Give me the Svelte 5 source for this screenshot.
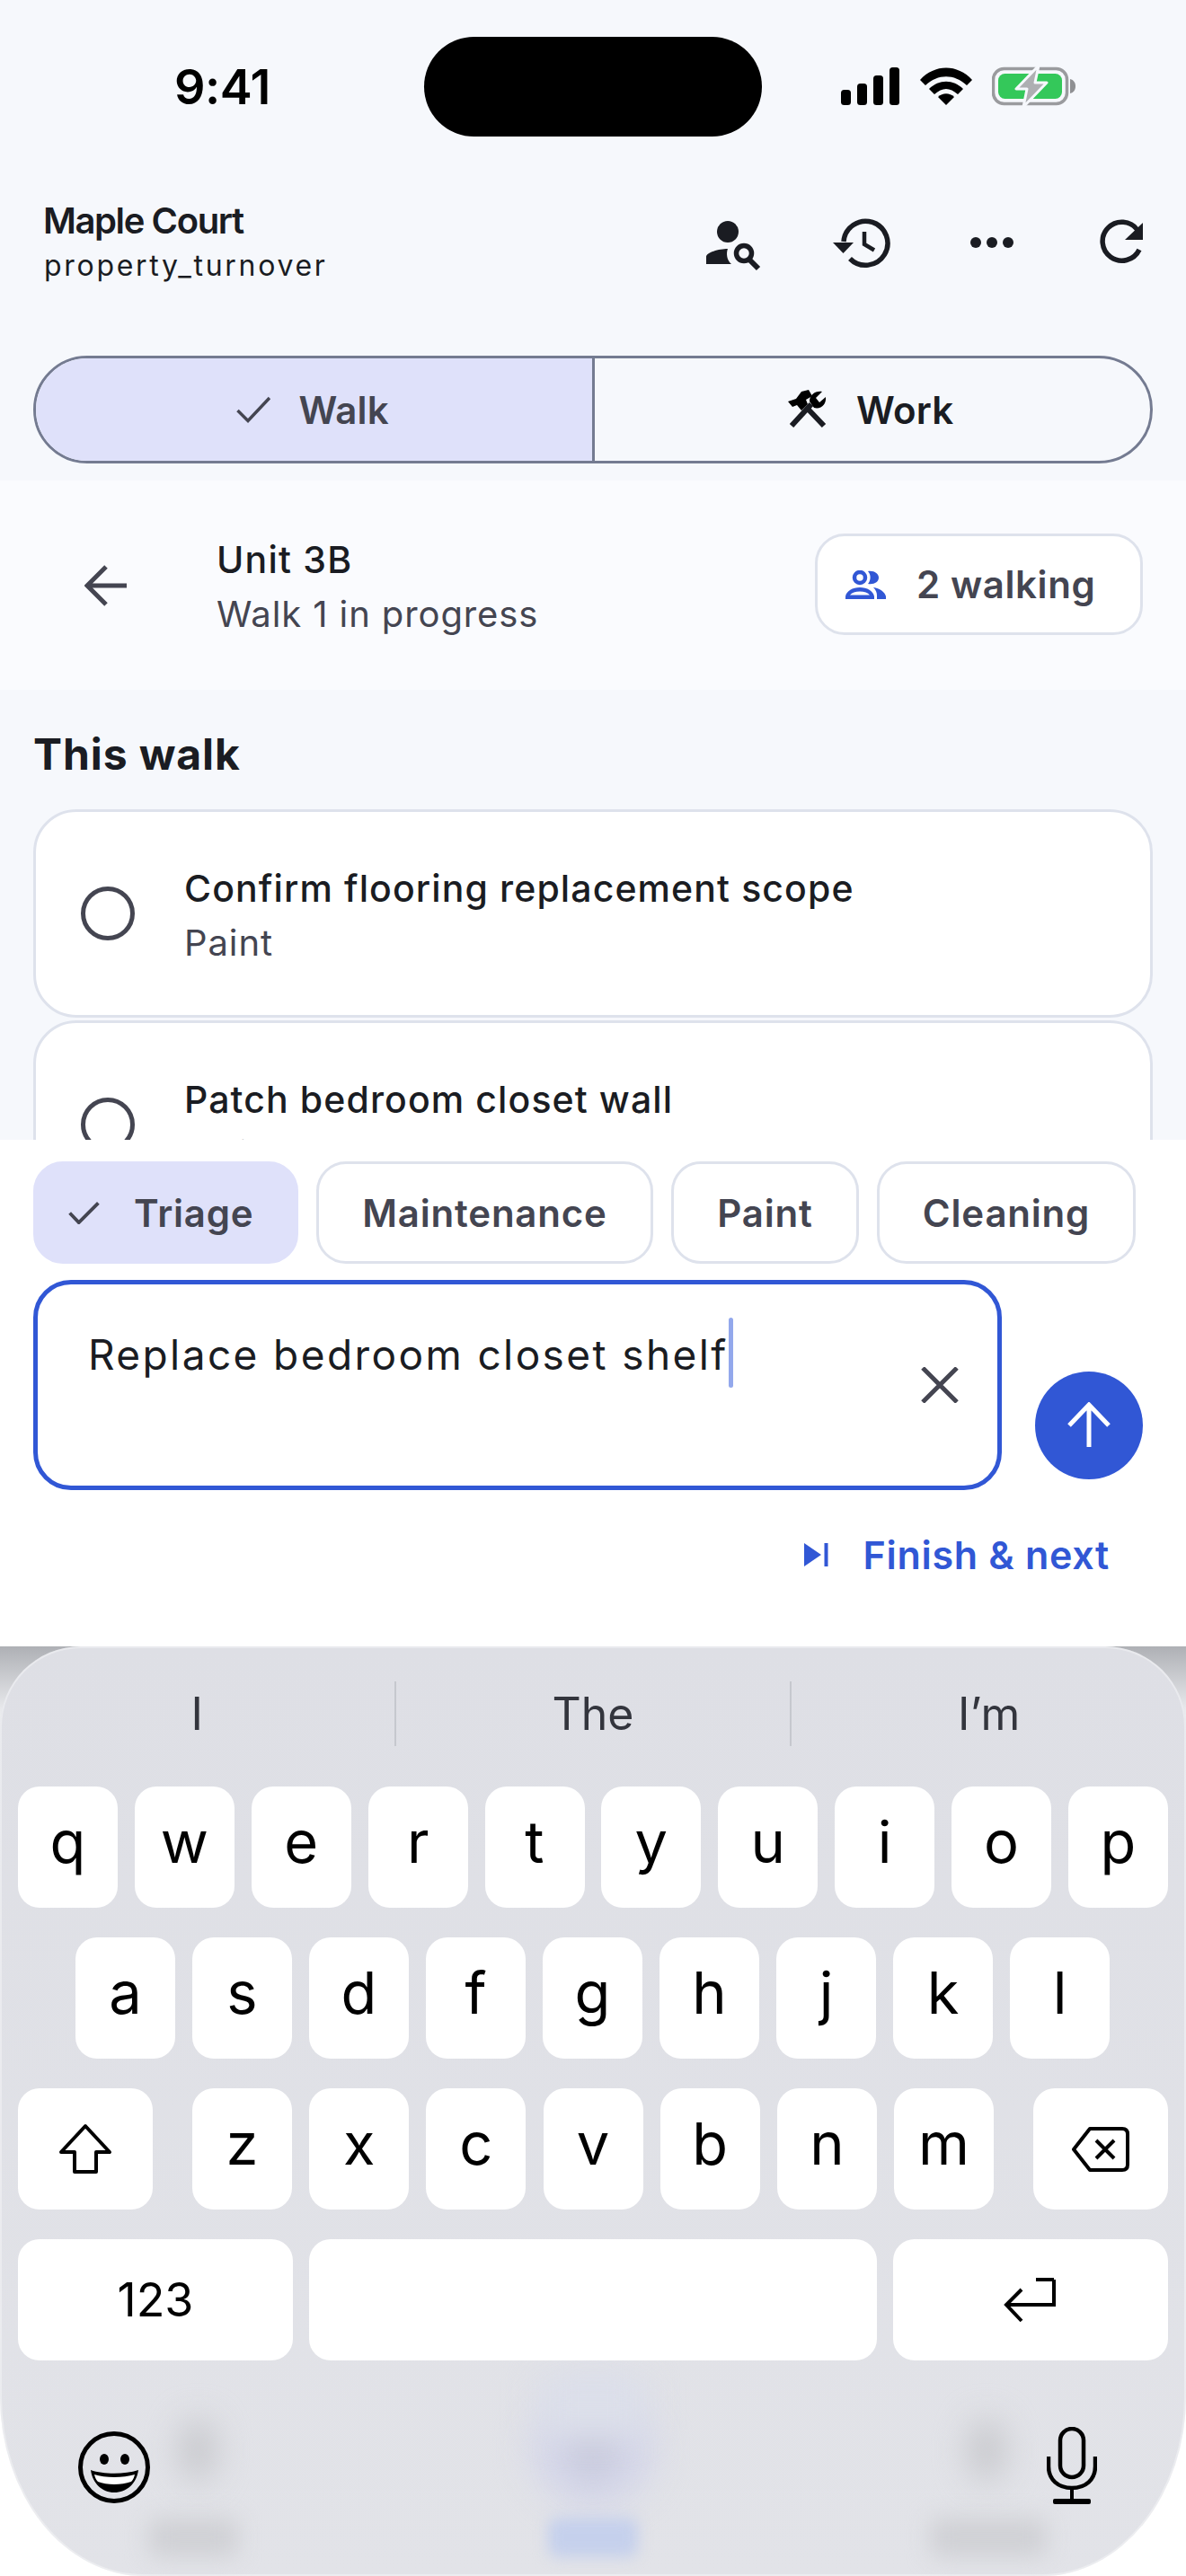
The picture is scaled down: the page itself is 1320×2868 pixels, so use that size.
<script>
  const chips = [
    { label: 'Maintenance', w: 375 },
    { label: 'Paint', w: 209 },
    { label: 'Cleaning', w: 288 }
  ];
  const row1 = ['q','w','e','r','t','y','u','i','o','p'];
  const row2 = ['a','s','d','f','g','h','j','k','l'];
  const row3 = ['z','x','c','v','b','n','m'];
</script>

<div class="phone">
  <header class="status">
    <span class="time">9:41</span>
    <div class="island"></div>
    <div class="sys">
      <svg class="signal" viewBox="0 0 66 42" width="66" height="42"><rect x="0" y="25" width="11" height="17" rx="3.5"/><rect x="18" y="18" width="11" height="24" rx="3.5"/><rect x="36" y="9" width="11" height="33" rx="3.5"/><rect x="54" y="0" width="11" height="42" rx="3.5"/></svg>
      <svg class="wifi" viewBox="0 0 58 42" width="58" height="42"><path d="M0 14 C16 -4 42 -4 58 14 L52 20 C38 7 20 7 6 20Z"/><path d="M10 24 C21 13 37 13 48 24 L42 30 C33 22 25 22 16 30Z"/><path d="M20 33 C25 28 33 28 38 33 L29 42Z"/></svg>
      <svg class="batt" viewBox="0 0 94 46" width="94" height="46"><rect x="1.5" y="3.5" width="82" height="39" rx="12" fill="none" stroke="#9a9b9e" stroke-width="3.5"/><rect x="7" y="9" width="71" height="28" rx="7.5" fill="#34c85a"/><path d="M87 15 C91 16 93 19 93 23 C93 27 91 30 87 31Z" fill="#8f9093"/><path d="M52 0 L27 26 L39 26 L35 46 L61 19 L48 19Z" fill="#aeafb2" stroke="#f6f8fc" stroke-width="3" stroke-linejoin="round"/></svg>
    </div>
  </header>

  <section class="topbar">
    <div class="brand">
      <div class="b1">Maple Court</div>
      <div class="b2">property_turnover</div>
    </div>
    <div class="tools">
      <svg class="tool" viewBox="0 0 60 60" width="60" height="60"><circle cx="24" cy="18" r="12"/><path d="M0 54 V46 C0 41 14 37 24 37 C22 42 23 50 28 54Z"/><circle cx="42" cy="42" r="8.5" fill="none" stroke="#1a1c22" stroke-width="5.5"/><path d="M48 49 L58 59" stroke="#1a1c22" stroke-width="6" fill="none"/></svg>
      <svg class="tool" viewBox="0 0 60 60" width="60" height="60"><path d="M9 29 A24.500 24.500 0 1 1 16 48" fill="none" stroke="#1a1c22" stroke-width="5.5"/><path d="M-3 30 L20 30 L8.500 42Z"/><path d="M32 18 V32 L43 38.500" fill="none" stroke="#1a1c22" stroke-width="4.5"/></svg>
      <svg class="tool" viewBox="0 0 60 60" width="60" height="60"><circle cx="12" cy="30" r="6"/><circle cx="30" cy="30" r="6"/><circle cx="48" cy="30" r="6"/></svg>
      <svg class="tool clip" viewBox="0 0 54 60" width="54" height="60"><path d="M48 16 A21.500 21.500 0 1 0 50 38" fill="none" stroke="#1a1c22" stroke-width="5.5"/><path d="M34 27 L54 8 L54 27Z"/></svg>
    </div>
  </section>

  <div class="seg">
    <div class="seg-btn on">
      <svg viewBox="0 0 38 30" width="38" height="30"><path d="M1.500 16 L13 27.500 L37 2" fill="none" stroke="#444551" stroke-width="3.5"/></svg>
      <span>Walk</span>
    </div>
    <div class="seg-btn off">
      <svg viewBox="0 0 44 44" width="44" height="44"><path d="M4 40 L26 16 M40 40 L20 19" fill="none" stroke="#1a1c22" stroke-width="6"/><path d="M0 13 L9 10 L15 2 L23 0 L27 7 L20 11 L22 16 L15 23 L10 17 L5 19Z"/><path d="M24 13 C24 6 30 1 38 2 L31 9 L35 14 L42 8 C43 16 37 22 29 20Z"/></svg>
      <span>Work</span>
    </div>
  </div>

  <section class="walkhead">
    <svg class="back" viewBox="0 0 48 48" width="48" height="48"><path d="M47 24 H4 M24 3 L3 24 L24 45" fill="none" stroke="#444551" stroke-width="5"/></svg>
    <div class="wh-text">
      <div class="wh1">Unit 3B</div>
      <div class="wh2">Walk 1 in progress</div>
    </div>
    <div class="walking">
      <svg viewBox="0 0 45 32" width="45" height="32"><circle cx="16" cy="8" r="6" fill="none" stroke="#3157d5" stroke-width="4.5"/><path d="M25 1 C32 0 37 4 37 8 C37 13 32 16 25 15 C28 12 29 5 25 1Z" fill="#3157d5"/><path d="M0 32 V29 C1 23 8 19 16 19 C24 19 31 23 32 29 V32Z M5 27.500 H27 C25 25 21 23.500 16 23.500 C11 23.500 7 25 5 27.500Z" fill="#3157d5" fill-rule="evenodd"/><path d="M31 19 C38 20 44 24 45 29 V32 H35 V28 C35 25 34 22 31 19Z" fill="#3157d5"/></svg>
      <span>2 walking</span>
    </div>
  </section>

  <section class="list">
    <h2>This walk</h2>
    <div class="card">
      <span class="radio"></span>
      <div class="ctext"><div class="c1">Confirm flooring replacement scope</div><div class="c2">Paint</div></div>
    </div>
    <div class="card">
      <span class="radio"></span>
      <div class="ctext"><div class="c1">Patch bedroom closet wall</div><div class="c2">Maintenance</div></div>
    </div>
  </section>

  <section class="composer">
    <div class="chips">
      <div class="chip on">
        <svg viewBox="0 0 36 26" width="35" height="25"><path d="M1.500 13 L12 24 L34.500 1.500" fill="none" stroke="#444551" stroke-width="4"/></svg>
        <span>Triage</span>
      </div>
      {#each chips as c}
        <div class="chip" style="width:{c.w}px">{c.label}</div>
      {/each}
      <div class="chip stub"></div>
    </div>
    <div class="inputrow">
      <div class="input">
        <span class="itext">Replace bedroom closet shelf</span><span class="caret"></span>
        <svg class="clear" viewBox="0 0 42 40" width="42" height="40"><path d="M2 1 L40 39 M40 1 L2 39" stroke="#444551" stroke-width="5" fill="none"/></svg>
      </div>
      <div class="send">
        <svg viewBox="0 0 52 52" width="52" height="52"><path d="M26 50 V4 M4 26 L26 3 L48 26" fill="none" stroke="#fff" stroke-width="5"/></svg>
      </div>
    </div>
    <div class="finish">
      <svg viewBox="0 0 28 28" width="28" height="28"><path d="M1 1 L20 14 L1 27Z" fill="#3157d5"/><rect x="23.500" y="1" width="4" height="26" fill="#3157d5"/></svg>
      <span>Finish &amp; next</span>
    </div>
  </section>

  <section class="kbwrap">
    <div class="kb">
      <i class="blob b-a"></i><i class="blob b-b"></i><i class="blob b-b2"></i><i class="blob b-b3"></i><i class="blob b-c"></i>
      <i class="blob t-a"></i><i class="blob t-b"></i><i class="blob t-c"></i>
      <div class="sugg">
        <span>I</span><span>The</span><span>I’m</span>
      </div>
      <div class="row r1">{#each row1 as k}<div class="key">{k}</div>{/each}</div>
      <div class="row r2">{#each row2 as k}<div class="key">{k}</div>{/each}</div>
      <div class="row r3">
        <div class="key shift">
          <svg viewBox="0 0 62 62" width="62" height="62"><path d="M31 5 L58 34 H43 V56 H19 V34 H4Z" fill="none" stroke="#000" stroke-width="4" stroke-linejoin="round"/></svg>
        </div>
        <div class="mid">{#each row3 as k}<div class="key">{k}</div>{/each}</div>
        <div class="key del">
          <svg viewBox="0 0 64 52" width="64" height="52"><path d="M20 3 H56 C60 3 62 5 62 9 V43 C62 47 60 49 56 49 H20 L2 26Z" fill="none" stroke="#000" stroke-width="4" stroke-linejoin="round"/><path d="M27 16 L47 36 M47 16 L27 36" stroke="#000" stroke-width="4" fill="none"/></svg>
        </div>
      </div>
      <div class="row r4">
        <div class="key k123">123</div>
        <div class="key space"></div>
        <div class="key ret">
          <svg viewBox="0 0 60 52" width="60" height="52"><path d="M56 3 V31 H4 M20 14 L3 31 L20 49 M36 3 H56" fill="none" stroke="#000" stroke-width="4"/></svg>
        </div>
      </div>
      <div class="kbbottom">
        <svg class="emoji" viewBox="0 0 80 80" width="80" height="80"><circle cx="40" cy="40" r="37.500" fill="none" stroke="#000" stroke-width="5"/><ellipse cx="29" cy="31" rx="5" ry="6"/><ellipse cx="52" cy="31" rx="5" ry="6"/><path d="M14 43 C28 48 52 48 67 43 C65 58 54 68 40 68 C27 68 16 58 14 43Z"/><path d="M18 48 C30 52 50 52 63 48 C62 52 61 54 59 56 C48 60 32 60 22 56 C20 54 19 52 18 48Z" fill="#fff"/></svg>
        <svg class="mic" viewBox="0 0 56 86" width="56" height="86"><rect x="15" y="2" width="26" height="54" rx="13" fill="none" stroke="#000" stroke-width="4.5"/><path d="M2 33 V44 C2 59 13 68 28 68 C43 68 54 59 54 44 V33" fill="none" stroke="#000" stroke-width="4.5"/><path d="M28 68 V82" stroke="#000" stroke-width="4"/><rect x="7" y="80" width="42" height="6" rx="2"/></svg>
      </div>
    </div>
  </section>
</div>

<style>
  :global(body) { margin: 0; background: #f6f8fc; }
  .phone { width: 1320px; height: 2868px; overflow: hidden; background: #f6f8fc; font-family: Inter, "Noto Sans", sans-serif; color: #1a1c22; display: flex; flex-direction: column; }
  .status { height: 194px; box-sizing: border-box; padding-top: 41px; display: flex; align-items: flex-start; position: relative; flex: none; }
  .time { position: absolute; left: 194px; top: 69px; font-size: 54px; line-height: 56px; font-weight: 600; letter-spacing: -0.5px; color: #000; }
  .island { width: 376px; height: 111px; border-radius: 56px; background: #000; margin-left: 472px; }
  .sys { position: absolute; left: 936px; top: 73px; display: flex; gap: 24px; align-items: center; }
  .sys svg { display: block; }
  .wifi { margin-left: -2px; }
  .batt { margin-left: -2px; }
  .topbar { height: 116px; box-sizing: border-box; padding: 28px 37px 0 49px; display: flex; justify-content: space-between; flex: none; }
  .b1 { font-size: 40px; line-height: 48px; font-weight: 600; letter-spacing: -1.4px; margin-left: -1px; }
  .b2 { font-size: 32px; line-height: 42px; letter-spacing: 2.7px; margin-top: 5px; }
  .tools { display: flex; gap: 84px; align-items: center; margin-top: 18px; height: 60px; width: 492px; flex: none; margin-right: 5px; }
  .tool { fill: #1a1c22; display: block; overflow: visible; flex: none; }
  .tool.clip { overflow: hidden; }
  .seg { margin: 86px 37px 0; height: 120px; box-sizing: border-box; border: 3px solid #747b91; border-radius: 60px; display: flex; overflow: hidden; flex: none; }
  .seg-btn { flex: 1; display: flex; align-items: center; justify-content: center; gap: 32px; font-size: 42px; font-weight: 600; letter-spacing: 0.2px; }
  .seg-btn.on { background: #dfe1fa; color: #444551; border-right: 3px solid #747b91; padding-right: 3px; }
  .seg-btn.off { color: #1a1c22; padding-right: 3px; }
  .walkhead { margin-top: 19px; height: 233px; background: #fafbfe; display: flex; align-items: center; box-sizing: border-box; padding: 0 48px 0 94px; flex: none; }
  .wh-text { margin-left: 99px; flex: 1; margin-top: 8px; }
  .wh1 { font-size: 41px; line-height: 52px; font-weight: 500; letter-spacing: 1.2px; color: #1a1c22; }
  .wh2 { font-size: 40px; line-height: 60px; margin-top: 5px; letter-spacing: 0.9px; color: #444551; }
  .walking { width: 365px; height: 113px; box-sizing: border-box; border: 3px solid #dee2ec; border-radius: 33px; background: #fff; display: flex; align-items: center; gap: 34px; padding-left: 31px; font-size: 42px; font-weight: 600; letter-spacing: 0.6px; color: #444551; margin-bottom: 2px; }
  .list { padding: 0 37px; flex: 1; min-height: 0; overflow: hidden; }
  .list h2 { margin: 44px 0 33px; font-size: 48px; line-height: 56px; font-weight: 700; letter-spacing: 0.9px; color: #1a1c22; }
  .card { height: 232px; box-sizing: border-box; border: 3px solid #dee2ec; border-radius: 48px; background: #fff; margin-bottom: 3px; display: flex; align-items: center; padding-left: 50px; gap: 55px; }
  .radio { width: 60px; height: 60px; box-sizing: border-box; border: 5px solid #444551; border-radius: 50%; flex: none; }
  .ctext { padding-top: 8px; }
  .c1 { font-size: 41px; line-height: 54px; font-weight: 500; letter-spacing: 1.1px; }
  .c2 { font-size: 40px; line-height: 60px; margin-top: 4px; letter-spacing: 0.9px; color: #444551; }
  .composer { flex: none; height: 564px; box-sizing: border-box; background: #fff; padding: 24px 37px 0; }
  .chips { display: flex; gap: 20px; overflow: hidden; height: 114px; }
  .chip { flex: none; height: 114px; box-sizing: border-box; border: 3px solid #dee2ec; border-radius: 33px; background: #fff; display: flex; align-items: center; justify-content: center; font-size: 42px; font-weight: 600; letter-spacing: 0.8px; color: #444551; }
  .chip.on { width: 295px; background: #dfe1fa; border-color: #dfe1fa; gap: 38px; justify-content: flex-start; padding-left: 36px; }
  .chip.stub { width: 40px; margin-left: -1px; }
  .inputrow { display: flex; margin-top: 18px; }
  .input { width: 1078px; height: 234px; box-sizing: border-box; border: 5px solid #3157d5; border-radius: 42px; padding: 45px 56px; position: relative; font-size: 46px; line-height: 66px; letter-spacing: 2.4px; color: #1a1c22; display: flex; align-items: flex-start; }
  .caret { width: 5px; height: 78px; margin-top: -8px; background: #93a8ec; border-radius: 3px; flex: none; }
  .clear { position: absolute; right: 43px; top: 92px; }
  .send { width: 120px; height: 120px; border-radius: 50%; background: #3157d5; margin-left: 37px; margin-top: 102px; display: flex; align-items: center; justify-content: center; }
  .finish { margin-top: 44px; display: flex; align-items: center; justify-content: flex-end; padding-right: 48px; gap: 39px; color: #3157d5; font-size: 43px; line-height: 56px; font-weight: 600; letter-spacing: 0.7px; }
  .kbwrap { flex: none; height: 1035px; background: linear-gradient(#aeb0b5 0, #e8e9ec 70px, #fff 130px, #fff 100%); }
  .kb { height: 1035px; box-sizing: border-box; background: linear-gradient(#dedfe5, #e2e3e8); border-radius: 90px 90px 160px 160px / 90px 90px 200px 200px; padding: 0 20px; position: relative; overflow: hidden; box-shadow: inset 0 0 0 2px rgba(255, 255, 255, 0.35); }
  .blob { position: absolute; display: block; filter: blur(18px); border-radius: 50%; }
  .b-a { left: 200px; top: 860px; width: 40px; height: 70px; background: #c6c7cb; }
  .b-b { left: 590px; top: 830px; width: 140px; height: 130px; background: #d6d8ea; }
  .b-b2 { left: 630px; top: 860px; width: 60px; height: 70px; background: #c8cadc; }
  .b-b3 { left: 600px; top: 810px; width: 120px; height: 70px; background: #dcdfea; border-radius: 10px; }
  .b-c { left: 1078px; top: 860px; width: 40px; height: 70px; background: #c6c7cb; }
  .t-a { left: 165px; top: 970px; width: 100px; height: 44px; background: #d0d1d5; border-radius: 10px; filter: blur(12px); }
  .t-b { left: 610px; top: 970px; width: 100px; height: 44px; background: #c5d0ec; border-radius: 10px; filter: blur(8px); }
  .t-c { left: 1035px; top: 970px; width: 130px; height: 44px; background: #d0d1d5; border-radius: 10px; filter: blur(12px); }
  .sugg { position: relative; display: flex; margin: 39px -20px 0; height: 72px; font-size: 50px; color: #33353d; align-items: center; }
  .sugg span { flex: 1; text-align: center; line-height: 72px; }
  .sugg span + span { border-left: 2px solid #c6c8ce; }
  .row { position: relative; display: flex; justify-content: space-between; margin-top: 33px; height: 135px; }
  .sugg + .row { margin-top: 45px; }
  .r2 { padding: 0 65px 0 64px; }
  .key { flex: none; width: 111px; height: 135px; border-radius: 24px; background: #fff; color: #000; font-size: 65px; display: flex; align-items: center; justify-content: center; padding-bottom: 12px; box-sizing: border-box; }
  .mid { display: flex; gap: 19.2px; }
  .shift { width: 150px; padding: 0; }
  .del { width: 150px; padding: 0; }
  .k123 { width: 306px; font-size: 52px; padding: 0; }
  .space { width: 632px; }
  .ret { width: 306px; padding: 0; }
  .kbbottom { position: absolute; left: 0; right: 0; top: 868px; }
  .emoji { position: absolute; left: 87px; top: 6px; }
  .mic { position: absolute; left: 1165px; top: 1px; }
</style>
